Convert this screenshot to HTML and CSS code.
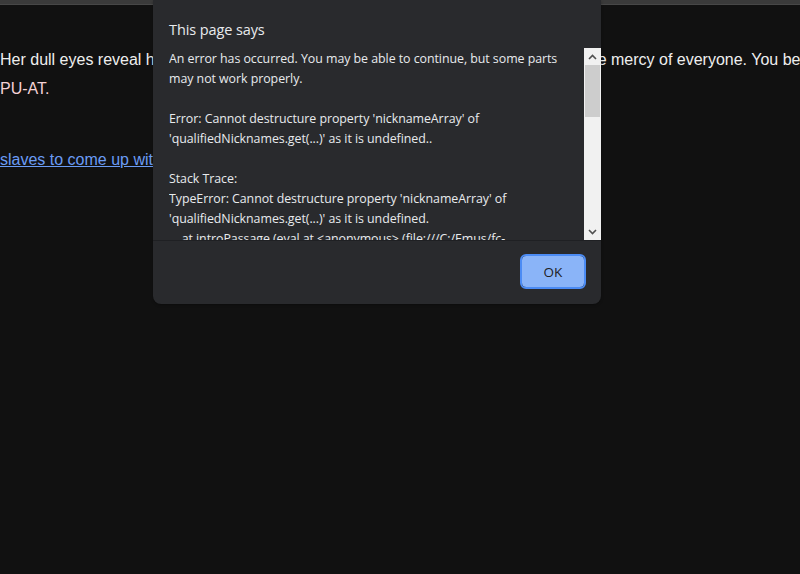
FILE: index.html
```html
<!DOCTYPE html>
<html lang="en">
<head>
<meta charset="utf-8">
<title>Free Cities</title>
<link rel="stylesheet" href="styles.css">
</head>
<body>
<div class="topbar"></div>
<main class="passage">
  <p class="intro">Her dull eyes reveal her acceptance of her fate: she realizes she is now entirely at the mercy of everyone. You become her owner as she is registered as a slave of the Arcology.<br><span class="pink">PU-AT.</span></p>
  <p class="choice"><a href="#" class="link">slaves to come up with a nickname for her</a></p>
</main>

<div class="dialog" role="alertdialog" aria-labelledby="dlg-title">
  <div class="dialog-body">
    <h1 id="dlg-title" class="dialog-title">This page says</h1>
    <div class="message-box">
      <div class="message">An error has occurred. You may be able to continue, but some parts
may not work properly.

Error: Cannot destructure property 'nicknameArray' of
'qualifiedNicknames.get(...)' as it is undefined..

Stack Trace:
TypeError: Cannot destructure property 'nicknameArray' of
'qualifiedNicknames.get(...)' as it is undefined.
    at introPassage (eval at &lt;anonymous&gt; (file:///C:/Emus/fc-</div>
      <div class="scrollbar" aria-hidden="true">
        <div class="sb-btn">
          <svg width="9" height="6" viewBox="0 0 9 6"><path d="M1 5 L4.5 1.5 L8 5" fill="none" stroke="#505050" stroke-width="1.6"/></svg>
        </div>
        <div class="sb-track">
          <div class="sb-thumb"></div>
        </div>
        <div class="sb-btn">
          <svg width="9" height="6" viewBox="0 0 9 6"><path d="M1 1 L4.5 4.5 L8 1" fill="none" stroke="#505050" stroke-width="1.6"/></svg>
        </div>
      </div>
    </div>
  </div>
  <div class="dialog-footer">
    <button class="ok-btn" type="button">OK</button>
  </div>
</div>
</body>
</html>
```
FILE: styles.css
```css
html, body {
  margin: 0;
  padding: 0;
  height: 100%;
  overflow: hidden;
}

body {
  background: #111111;
  color: #eeeeee;
  font-family: "Liberation Sans", Arial, sans-serif;
  font-size: 16px;
  position: relative;
}

.topbar {
  height: 4px;
  background: #3a3a3a;
  border-bottom: 1px solid #474747;
}

.passage {
  padding-top: 40px;
}

.intro {
  margin: 0;
  line-height: 29px;
  white-space: nowrap;
}

.pink {
  color: #f4d2d6;
}

.choice {
  margin: 42px 0 0;
  line-height: 29px;
  white-space: nowrap;
}

.link {
  color: #6b9cf5;
  text-decoration: underline;
}

/* Alert dialog */
.dialog {
  position: absolute;
  left: 153px;
  top: 0;
  width: 448px;
  background: #292a2d;
  border-radius: 0 0 8px 8px;
  color: #e8eaed;
  font-family: "Open Sans", "Noto Sans", sans-serif;
  box-shadow: 0 1px 3px rgba(0, 0, 0, 0.3);
}

.dialog-body {
  padding: 20px 0 0 16px;
}

.dialog-title {
  margin: 0 0 8px;
  font-size: 14.5px;
  font-weight: 400;
  line-height: 20px;
  letter-spacing: -0.1px;
}

.message-box {
  display: flex;
  height: 192px;
}

.message {
  flex: 1;
  overflow: hidden;
  white-space: pre;
  font-size: 12.4px;
  line-height: 20px;
  letter-spacing: -0.05px;
  padding-top: 1px;
}

.scrollbar {
  width: 17px;
  background: #f1f1f1;
  display: flex;
  flex-direction: column;
}

.sb-btn {
  height: 17px;
  display: flex;
  align-items: center;
  justify-content: center;
}

.sb-track {
  flex: 1;
  padding: 0 1px;
}

.sb-thumb {
  height: 52px;
  background: #cdcdcd;
}

.dialog-footer {
  border-top: 1px solid #1f2023;
  display: flex;
  justify-content: flex-end;
  padding: 14px 16px 16px;
}

.ok-btn {
  width: 64px;
  height: 33px;
  background: #8ab4f8;
  color: #202124;
  border: 1px solid #1e2a3c;
  border-radius: 5px;
  outline: 2px solid #4b8bf4;
  outline-offset: -1px;
  font-family: "Open Sans", "Noto Sans", sans-serif;
  font-size: 13.5px;
  padding: 0;
}
```
